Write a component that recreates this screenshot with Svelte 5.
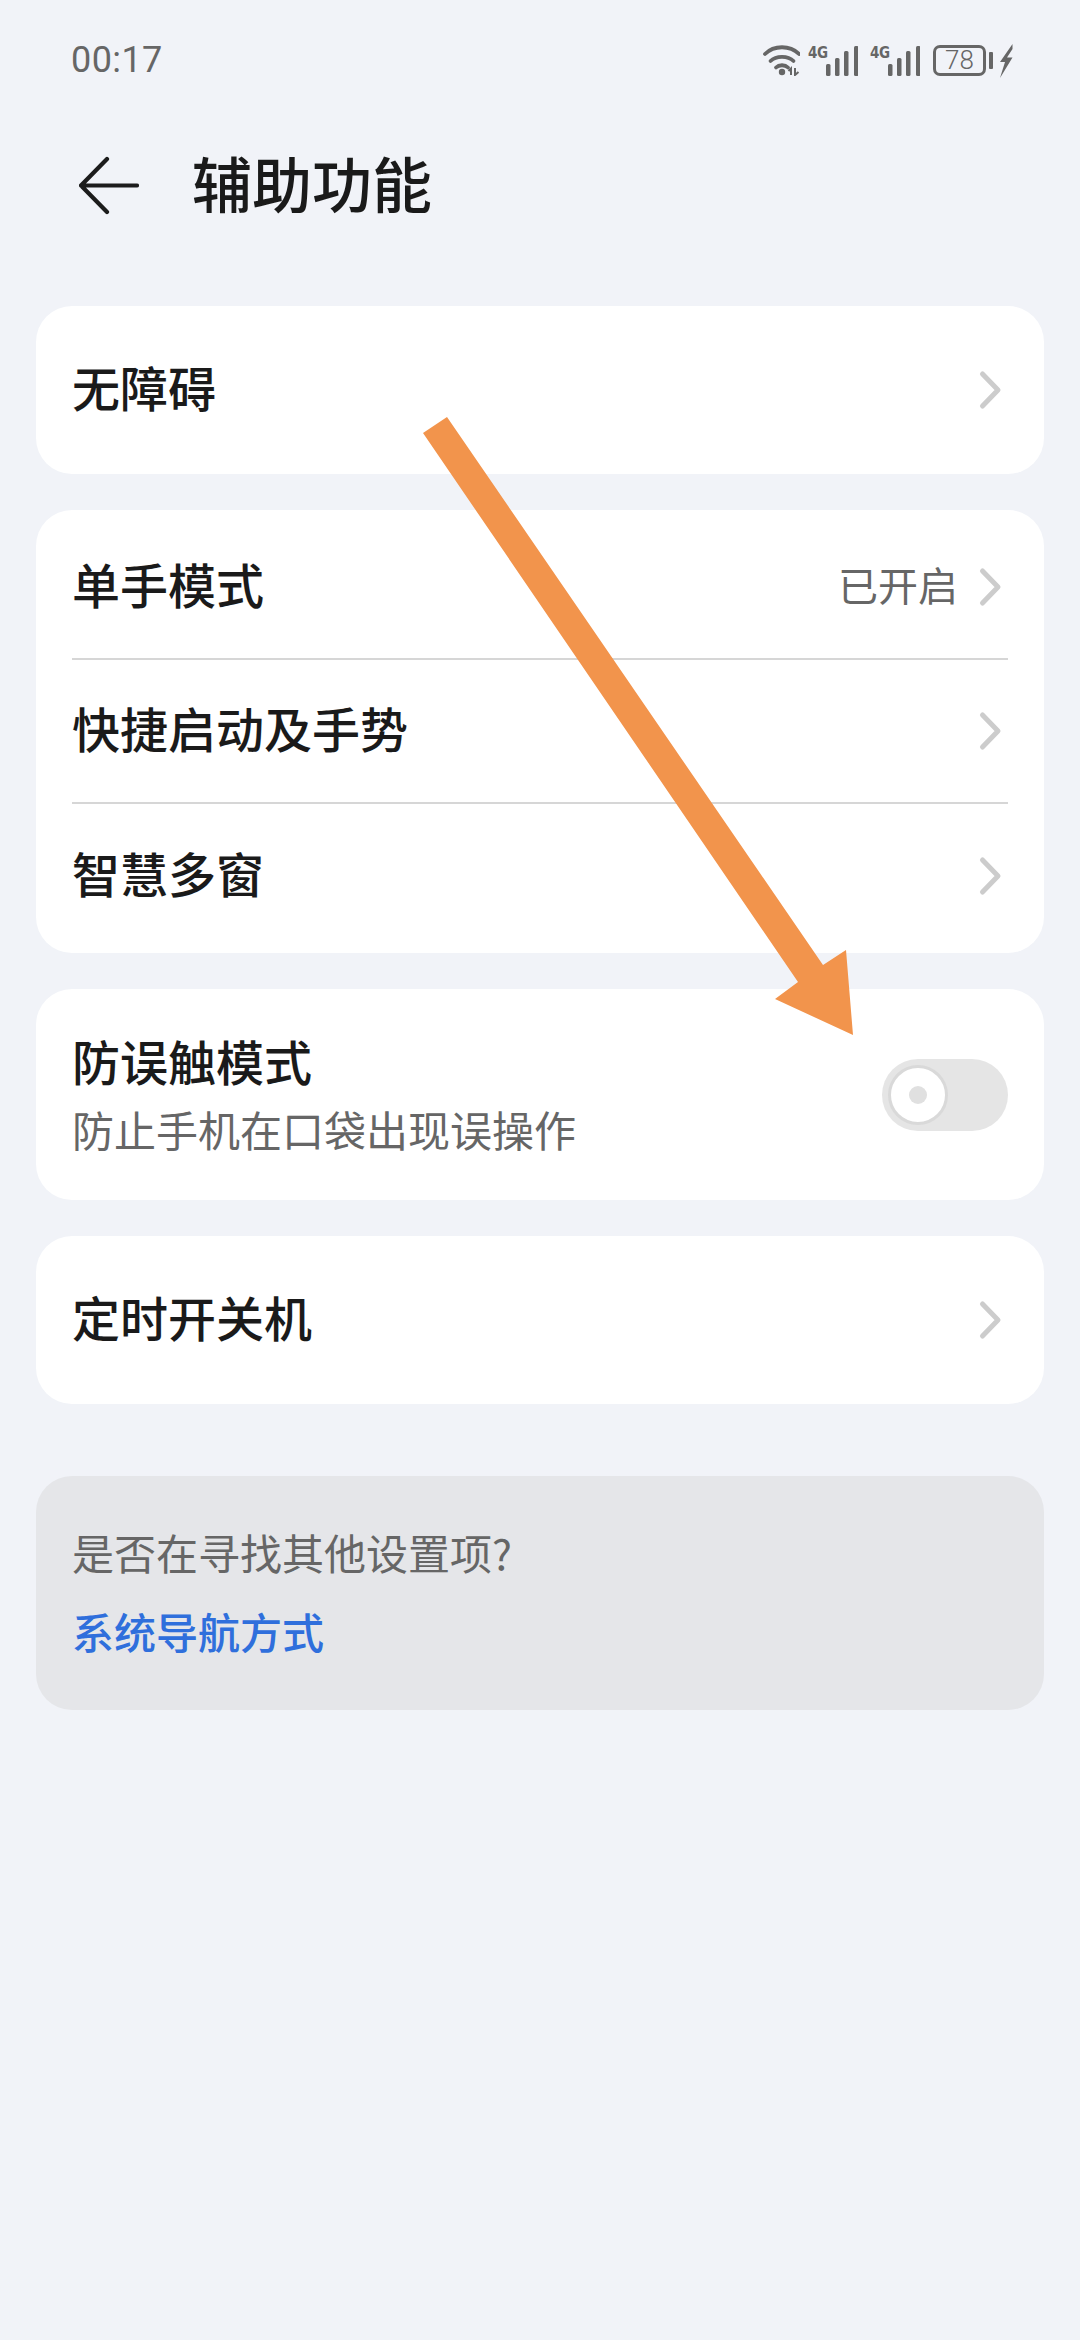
<script>
  const listRows = [
    { label: '单手模式', value: '已开启' },
    { label: '快捷启动及手势' },
    { label: '智慧多窗' }
  ];
  const signalBars = [
    { x: 0, h: 12 },
    { x: 9, h: 18 },
    { x: 18, h: 25 },
    { x: 28, h: 30 }
  ];
</script>

{#snippet chevron()}
  <svg class="chevron" width="24" height="40" viewBox="0 0 24 40">
    <path d="M4.5 4 L20 20 L4.5 36" fill="none" stroke="#cccccc" stroke-width="5" stroke-linecap="round" stroke-linejoin="round" />
  </svg>
{/snippet}

{#snippet signal()}
  <span class="net">4G</span>
  <svg class="bars" width="32" height="30" viewBox="0 0 32 30">
    {#each signalBars as bar}
      <rect x={bar.x} y={30 - bar.h} width="4.5" height={bar.h} rx="1.5" fill="#666666" />
    {/each}
  </svg>
{/snippet}

<div class="page">
  <div class="status">
    <span class="time">00:17</span>
    <div class="status-icons">
      <svg class="wifi" width="40" height="32" viewBox="-3 0 40 32">
        <g fill="none" stroke="#666666" stroke-width="3.8" stroke-linecap="round">
          <path d="M2 10 C11 1 27 1 36 10" />
          <path d="M7.5 17 C13 11.5 25 11.5 30.5 17" />
          <path d="M13 23.5 C16 20.5 22 20.5 25 23.5" />
        </g>
        <circle cx="19" cy="28" r="3.2" fill="#666666" />
        <path d="M28 31 V24.5 L25.5 27 M32 24 V31 L35.5 28" fill="none" stroke="#666666" stroke-width="2" />
      </svg>
      {@render signal()}
      <div class="gap-net"></div>
      {@render signal()}
      <div class="battery"><span>78</span></div>
      <div class="nub"></div>
      <svg class="bolt" width="14" height="34" viewBox="0 0 14 34">
        <path d="M13.5 0 L1 18 L6 18 L1 34 L13.5 13.5 L8 13.5 L13.5 5 Z" fill="#666666" />
      </svg>
    </div>
  </div>

  <header class="header">
    <svg class="back" width="60" height="60" viewBox="0 0 60 60">
      <path d="M28 3 L2 29.5 L28 56 M2 29.5 H58" fill="none" stroke="#1c1c1c" stroke-width="4.2" stroke-linecap="round" stroke-linejoin="round" />
    </svg>
    <h1>辅助功能</h1>
  </header>

  <section class="card single">
    <span class="label">无障碍</span>
    {@render chevron()}
  </section>

  <section class="card list">
    {#each listRows as row, i}
      <div class="row" class:divided={i < listRows.length - 1}>
        <span class="label">{row.label}</span>
        <div class="row-end">
          {#if row.value}<span class="value">{row.value}</span>{/if}
          {@render chevron()}
        </div>
      </div>
    {/each}
  </section>

  <section class="card switch-card">
    <div class="switch-text">
      <span class="label">防误触模式</span>
      <span class="sub">防止手机在口袋出现误操作</span>
    </div>
    <div class="toggle">
      <div class="thumb"><div class="dot"></div></div>
    </div>
  </section>

  <section class="card single">
    <span class="label">定时开关机</span>
    {@render chevron()}
  </section>

  <section class="hint">
    <span class="sub">是否在寻找其他设置项?</span>
    <span class="link">系统导航方式</span>
  </section>

  <!-- annotation drawn over the screenshot -->
  <svg class="arrow" width="1080" height="2340" viewBox="0 0 1080 2340">
    <polygon points="423,433 447,417 823,965 846,950 853,1035 775,999 798,982" fill="#f2944c" />
  </svg>
</div>

<style>
:global(body) {
  margin: 0;
  background: #f1f3f8;
}

.page {
  position: relative;
  width: 1080px;
  height: 2340px;
  box-sizing: border-box;
  padding: 0 36px;
  overflow: hidden;
  background: #f1f3f8;
  font-family: "Noto Sans CJK SC", "Noto Sans", sans-serif;
  color: #1a1a1a;
}

.status {
  display: flex;
  align-items: center;
  justify-content: space-between;
  height: 120px;
  padding: 0 31px 0 35px;
}

.time {
  font-family: Roboto, "Noto Sans", sans-serif;
  font-size: 36px;
  letter-spacing: 0.4px;
  color: #666666;
}

.status-icons {
  display: flex;
  align-items: flex-start;
  height: 34px;
  margin-top: 1px;
}

.wifi {
  margin-right: 8px;
}

.net {
  width: 18px;
  margin-top: 2px;
  font-family: "DejaVu Sans Condensed", "DejaVu Sans", sans-serif;
  font-size: 15px;
  font-weight: 700;
  line-height: 14px;
  color: #666666;
  letter-spacing: -0.5px;
}

.bars {
  margin-top: 2px;
}

.gap-net {
  width: 12px;
}

.battery {
  display: flex;
  align-items: center;
  justify-content: center;
  width: 53px;
  height: 31px;
  margin-left: 13px;
  margin-top: 1px;
  box-sizing: border-box;
  border: 3px solid #666666;
  border-radius: 7px;
  font-family: Roboto, sans-serif;
  font-size: 26px;
  font-weight: 300;
  color: #666666;
}

.nub {
  width: 4px;
  height: 17px;
  margin: 8px 6px 0 3px;
  border-radius: 1px;
  background: #666666;
}

.header {
  display: flex;
  align-items: center;
  gap: 53px;
  height: 132px;
  margin-bottom: 54px;
  padding-left: 43px;
}

.back {
  flex: none;
}

h1 {
  margin: 0;
  padding-bottom: 8px;
  font-size: 60px;
  font-weight: 500;
  line-height: 1;
}

.card {
  box-sizing: border-box;
  margin-bottom: 36px;
  border-radius: 36px;
  background: #ffffff;
}

.single {
  display: flex;
  align-items: center;
  justify-content: space-between;
  height: 168px;
  padding: 0 42px 0 36px;
}

.label {
  padding-bottom: 6px;
  font-size: 48px;
  font-weight: 500;
  line-height: 1.2;
}

.list {
  height: 443px;
  padding: 6px 36px 5px;
}

.row {
  display: flex;
  align-items: center;
  justify-content: space-between;
  box-sizing: border-box;
  height: 144px;
  padding: 0 6px 0 0;
}

.divided {
  border-bottom: 2px solid #d6d6d6;
}

.row-end {
  display: flex;
  align-items: center;
  gap: 20px;
}

.value {
  padding-bottom: 6px;
  font-size: 40px;
  color: #666666;
}

.chevron {
  display: block;
}

.switch-card {
  display: flex;
  align-items: center;
  justify-content: space-between;
  height: 211px;
  padding: 0 36px 0 36px;
}

.switch-text {
  display: flex;
  flex-direction: column;
  gap: 6px;
}

.sub {
  font-size: 42px;
  line-height: 1.3;
  color: #666666;
}

.toggle {
  display: flex;
  align-items: center;
  box-sizing: border-box;
  width: 126px;
  height: 72px;
  padding-left: 6px;
  border-radius: 36px;
  background: #e5e5e5;
}

.thumb {
  display: flex;
  align-items: center;
  justify-content: center;
  box-sizing: border-box;
  width: 60px;
  height: 60px;
  border: 3px solid #d9d9d9;
  border-radius: 50%;
  background: #ffffff;
}

.dot {
  width: 18px;
  height: 18px;
  border-radius: 50%;
  background: #e0e0e0;
}

.hint {
  display: flex;
  flex-direction: column;
  gap: 24px;
  box-sizing: border-box;
  height: 234px;
  margin-top: 72px;
  padding: 49px 36px 0;
  border-radius: 36px;
  background: #e5e6e9;
}

.link {
  font-size: 42px;
  font-weight: 500;
  line-height: 1.3;
  color: #2f6fdc;
}

.arrow {
  position: absolute;
  top: 0;
  left: 0;
  pointer-events: none;
}
</style>
